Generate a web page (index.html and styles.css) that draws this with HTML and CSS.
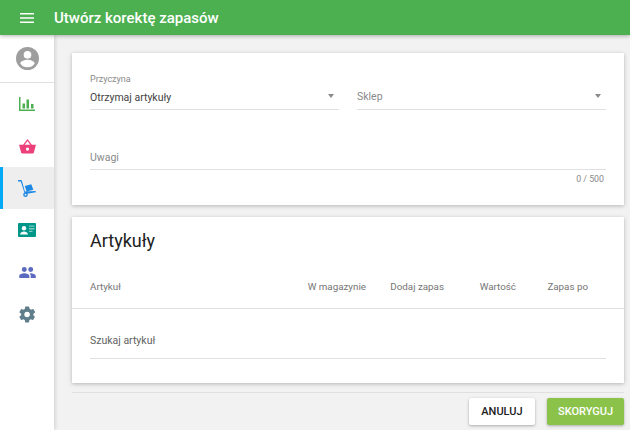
FILE: index.html
```html
<!DOCTYPE html>
<html lang="pl">
<head>
<meta charset="utf-8">
<title>Utwórz korektę zapasów</title>
<link rel="stylesheet" href="styles.css">
</head>
<body>
<header class="toolbar">
  <svg class="menu-icon" viewBox="0 0 14 10" width="14" height="10"><path d="M0 0h14v1.600H0zM0 4.200h14v1.600H0zM0 8.400h14V10H0z" fill="#fff"/></svg>
  <h1 class="title">Utwórz korektę zapasów</h1>
</header>
<div class="shell">
  <nav class="sidebar">
    <div class="profile">
      <svg viewBox="0 0 24 24" width="23" height="23"><path fill="#9e9e9e" d="M12 0a12 12 0 1 0 0 24 12 12 0 0 0 0-24zm0 4.200a4 4 0 1 1 0 8 4 4 0 0 1 0-8zm0 17a9 9 0 0 1-7.500-4c.1-2.500 5-3.800 7.500-3.800s7.400 1.300 7.500 3.800a9 9 0 0 1-7.500 4z"/></svg>
    </div>
    <div class="nav-item">
      <svg viewBox="0 0 16 14" width="16" height="14"><path fill="#4caf50" d="M0 0h1.500v12.500H16V14H0zM3.500 6.500H6v5H3.500zM7.500 2.500H10v9H7.500zM12 7h2.500v4.500H12z"/></svg>
    </div>
    <div class="nav-item">
      <svg viewBox="0 0 18 16" width="17" height="15"><path fill="#ec407a" d="M9 0 4.300 6H0l2.200 8.500c.1.600.7 1 1.300 1h11c.6 0 1.200-.4 1.300-1L18 6h-4.300zM6 6l3-3.900L12 6zm3 3a1.700 1.700 0 1 1 0 3.400A1.700 1.700 0 0 1 9 9z"/></svg>
    </div>
    <div class="nav-item nav-active">
      <svg viewBox="0 0 18 17" width="18" height="17"><path fill="#1e88e5" d="M0 0h3.200l.7.800 3 10.700L17.500 11l.5 1.300-10.500 1.700-.9-.8L2.800 1.500H0zM6.800 6l6.500-1.800 2 5.500L8.600 11.500z"/><circle cx="7.500" cy="14.700" r="2.300" fill="#1e88e5"/><circle cx="7.500" cy="14.700" r=".9" fill="#eee"/></svg>
    </div>
    <div class="nav-item">
      <svg viewBox="0 0 18 14" width="18" height="14"><path fill="#009688" d="M1 0h16a1 1 0 0 1 1 1v12a1 1 0 0 1-1 1H1a1 1 0 0 1-1-1V1a1 1 0 0 1 1-1z"/><circle cx="6" cy="5.200" r="2.200" fill="#fff"/><path fill="#fff" d="M2 11.500c0-2 2.500-3 4-3s4 1 4 3z"/><path fill="#80cbc4" d="M11 2.500h5.500v1.300H11zM11 5.100h5.500v1.300H11zM11 7.700h3.500v1.300H11z"/></svg>
    </div>
    <div class="nav-item">
      <svg viewBox="0 0 18 12" width="17" height="11"><path fill="#5c6bc0" d="M5.500 0a2.700 2.700 0 1 1 0 5.400 2.700 2.700 0 0 1 0-5.400zM12.500 0a2.700 2.700 0 1 1 0 5.400 2.700 2.700 0 0 1 0-5.400zM5.500 6.800c2 0 5.500 1 5.500 2.900V12H0V9.700c0-1.900 3.500-2.900 5.500-2.900zM12.500 6.800c1.900 0 5.500 1 5.500 2.900V12h-5.500V9.500c0-1-.5-1.800-1.200-2.500z"/></svg>
    </div>
    <div class="nav-item">
      <svg viewBox="0 0 24 24" width="19" height="19"><path fill="#607d8b" d="M19.400 13c.1-.3.100-.7.100-1s0-.7-.1-1l2.100-1.600c.2-.2.200-.4.100-.6l-2-3.500c-.1-.2-.4-.3-.6-.2l-2.500 1c-.5-.4-1.100-.7-1.700-1L14 2.400c0-.2-.2-.4-.5-.4h-4c-.2 0-.4.200-.5.400l-.4 2.700c-.6.300-1.100.6-1.700 1l-2.500-1c-.2-.1-.5 0-.6.200l-2 3.500c-.1.200-.1.500.1.600L4 11c0 .3-.1.700-.1 1s0 .7.100 1l-2.100 1.600c-.2.200-.2.400-.1.600l2 3.500c.1.200.4.300.6.200l2.500-1c.5.400 1.100.7 1.700 1l.4 2.700c0 .2.200.4.500.4h4c.2 0 .5-.2.500-.4l.4-2.700c.6-.3 1.200-.6 1.700-1l2.500 1c.2.100.5 0 .6-.2l2-3.500c.1-.2.100-.5-.1-.6zM11.500 15.500a3.500 3.500 0 1 1 0-7 3.500 3.500 0 0 1 0 7z"/></svg>
    </div>
  </nav>
  <main class="content">
    <section class="card card-form">
      <div class="field-row">
        <div class="field">
          <span class="field-label">Przyczyna</span>
          <div class="select"><span class="select-value">Otrzymaj artykuły</span><i class="caret"></i></div>
        </div>
        <div class="field">
          <span class="field-label">&nbsp;</span>
          <div class="select"><span class="placeholder select-placeholder">Sklep</span><i class="caret"></i></div>
        </div>
      </div>
      <div class="notes"><span class="placeholder">Uwagi</span></div>
      <div class="counter">0 / 500</div>
    </section>
    <section class="card card-items">
      <h2 class="card-title">Artykuły</h2>
      <div class="table-head">
        <span class="col-name">Artykuł</span>
        <span>W magazynie</span>
        <span>Dodaj zapas</span>
        <span>Wartość</span>
        <span>Zapas po</span>
      </div>
      <div class="search-wrap">
        <div class="search"><span class="search-text">Szukaj artykuł</span></div>
      </div>
    </section>
    <footer class="actions">
      <button class="btn btn-cancel" type="button">ANULUJ</button>
      <button class="btn btn-save" type="button">SKORYGUJ</button>
    </footer>
  </main>
</div>
</body>
</html>
```
FILE: styles.css
```css
* { box-sizing: border-box; }
html, body { margin: 0; padding: 0; height: 100%; overflow: hidden; }
body {
  width: 630px;
  height: 430px;
  background: #f2f2f2;
  font-family: Roboto, "Liberation Sans", sans-serif;
  color: #212121;
  display: flex;
  flex-direction: column;
}
.toolbar {
  height: 35px;
  flex: none;
  background: #4caf50;
  display: flex;
  align-items: center;
  padding-left: 20px;
  gap: 20px;
  box-shadow: 0 1px 4px rgba(0,0,0,.3);
  position: relative;
  z-index: 2;
}
.title { margin: 0; font-size: 15px; font-weight: 500; color: #fff; }
.shell { flex: 1; display: flex; min-height: 0; }
.sidebar {
  width: 54px;
  flex: none;
  background: #fff;
  box-shadow: 1px 0 4px rgba(0,0,0,.15);
}
.profile {
  height: 48px;
  display: flex;
  align-items: center;
  justify-content: center;
  border-bottom: 1px solid #e0e0e0;
}
.nav-item {
  height: 42px;
  display: flex;
  align-items: center;
  justify-content: center;
}
.nav-active { background: #eee; border-left: 3px solid #03a9f4; padding-right: 3px; }
.content { flex: 1; padding: 18px 6px 0 18px; display: flex; flex-direction: column; min-width: 0; }
.card { background: #fff; box-shadow: 0 1px 4px rgba(0,0,0,.25); }
.card-form { height: 152px; padding: 20px 18px 0; }
.field-row { display: flex; gap: 18px; }
.field { flex: 1; height: 37px; border-bottom: 1px solid #e0e0e0; }
.field-label { display: block; font-size: 9px; line-height: 12px; color: #8a8a8a; }
.select { display: flex; align-items: center; justify-content: space-between; height: 24px; padding-right: 5px; }
.select-value { font-size: 10.500px; color: #424242; }
.placeholder { font-size: 10.500px; color: #8a8a8a; }
.select-placeholder { margin-bottom: 2px; }
.caret { width: 0; height: 0; border: 3.500px solid transparent; border-top: 4px solid #8a8a8a; border-bottom: 0; margin-top: -3px; }
.notes { height: 38px; margin-top: 22px; border-bottom: 1px solid #e0e0e0; display: flex; align-items: center; padding-top: 14px; }
.counter { font-size: 8.800px; color: #8a8a8a; text-align: right; padding: 3px 2px 0 0; line-height: 12px; }
.card-items { height: 166px; margin-top: 12px; }
.card-title { margin: 0; font-size: 18px; font-weight: 400; line-height: 24px; padding: 12px 18px 0; color: #212121; }
.table-head {
  height: 56px;
  display: grid;
  grid-template-columns: 1fr 78px 78px 72px 72px;
  align-items: center;
  padding: 12px 36px 0 18px;
  border-bottom: 1px solid #e0e0e0;
  font-size: 9.800px;
  font-weight: 400;
  color: #757575;
  text-align: right;
}
.table-head .col-name { text-align: left; }
.search-wrap { padding: 0 18px; }
.search { height: 50px; border-bottom: 1px solid #e0e0e0; display: flex; align-items: center; padding-top: 13px; }
.search-text { font-size: 10.500px; color: #616161; }
.actions {
  margin-top: 9px;
  border-top: 1px solid #e0e0e0;
  padding-top: 5px;
  display: flex;
  justify-content: flex-end;
  gap: 12px;
}
.btn {
  height: 27px;
  border: 0;
  border-radius: 2px;
  font-family: inherit;
  font-size: 11px;
  font-weight: 500;
  padding: 0;
  box-shadow: 0 1px 3px rgba(0,0,0,.3);
}
.btn-cancel { width: 66px; background: #fff; color: #212121; }
.btn-save { width: 77px; background: #8bc34a; color: #fff; }
```
